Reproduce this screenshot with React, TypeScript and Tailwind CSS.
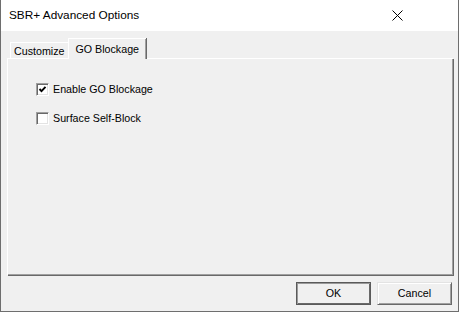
import React from "react";

const font = { fontFamily: '"Liberation Sans", Arial, sans-serif' };

function Check({ checked, label }: { checked: boolean; label: string }) {
  return (
    <div className="flex h-[13px] items-center gap-[4px]">
      <div className="relative h-[13px] w-[13px] bg-white border border-t-[#a0a0a0] border-l-[#a0a0a0] border-r-white border-b-white shadow-[inset_1px_1px_0_#696969,inset_-1px_-1px_0_#e3e3e3]">
        {checked && (
          <svg className="absolute left-[1px] top-[1px]" width="9" height="9" viewBox="0 0 9 9">
            <polyline points="1.5,4 3.5,6.2 7.5,1.8" fill="none" stroke="#000" strokeWidth="1.9" />
          </svg>
        )}
      </div>
      <span className="text-[10.7px] leading-[13px] text-black">{label}</span>
    </div>
  );
}

export default function App() {
  return (
    <div
      style={font}
      className="flex h-[312px] w-[459px] flex-col border-l border-r border-b border-[#6e6e6e] bg-[#f0f0f0] text-black"
    >
      <div className="flex h-[31px] items-center justify-between bg-white pl-[8px] pr-[55px]">
        <span className="text-[11.8px]">SBR+ Advanced Options</span>
        <svg width="11" height="11" viewBox="0 0 11 11">
          <path d="M0.5 0.5 L10.5 10.5 M10.5 0.5 L0.5 10.5" stroke="#000" strokeWidth="1" />
        </svg>
      </div>
      <div className="flex flex-col pl-[6px] pr-[5px]">
        <div className="flex h-[27px] items-end pl-[3px]">
          <div className="flex h-[16px] items-center border-t border-l border-r border-t-white border-l-white border-r-[#a0a0a0] pl-[3px] pr-[5px] pt-[1px] text-[10.7px]">
            Customize
          </div>
          <div className="relative z-10 -mb-[1px] -ml-[2px] flex h-[21px] items-start border-t border-l border-t-white border-l-white bg-[#f0f0f0] pl-[6px] pr-[7px] pt-[2px] text-[10.7px] shadow-[inset_-1px_0_0_#a0a0a0,1px_0_0_#696969]">
            GO Blockage
          </div>
        </div>
        <div className="flex h-[217px] flex-col gap-[16px] border-t border-l border-t-white border-l-white pl-[28px] pt-[24px] shadow-[inset_-1px_-1px_0_#a0a0a0,1px_1px_0_#696969]">
          <Check checked label="Enable GO Blockage" />
          <Check checked={false} label="Surface Self-Block" />
        </div>
      </div>
      <div className="flex justify-end gap-[6px] pr-[6px] pt-[7px]">
        <button className="flex h-[23px] w-[75px] items-center justify-center border border-[#5a5a5a] bg-[#f0f0f0] text-[10.7px] shadow-[inset_1px_1px_0_#9a9a9a,inset_-1px_-1px_0_#696969]">
          OK
        </button>
        <button className="flex h-[23px] w-[75px] items-center justify-center border border-t-[#e3e3e3] border-l-[#e3e3e3] border-r-[#696969] border-b-[#696969] bg-[#f0f0f0] text-[10.7px] shadow-[inset_1px_1px_0_#ffffff,inset_-1px_-1px_0_#a0a0a0]">
          Cancel
        </button>
      </div>
    </div>
  );
}
